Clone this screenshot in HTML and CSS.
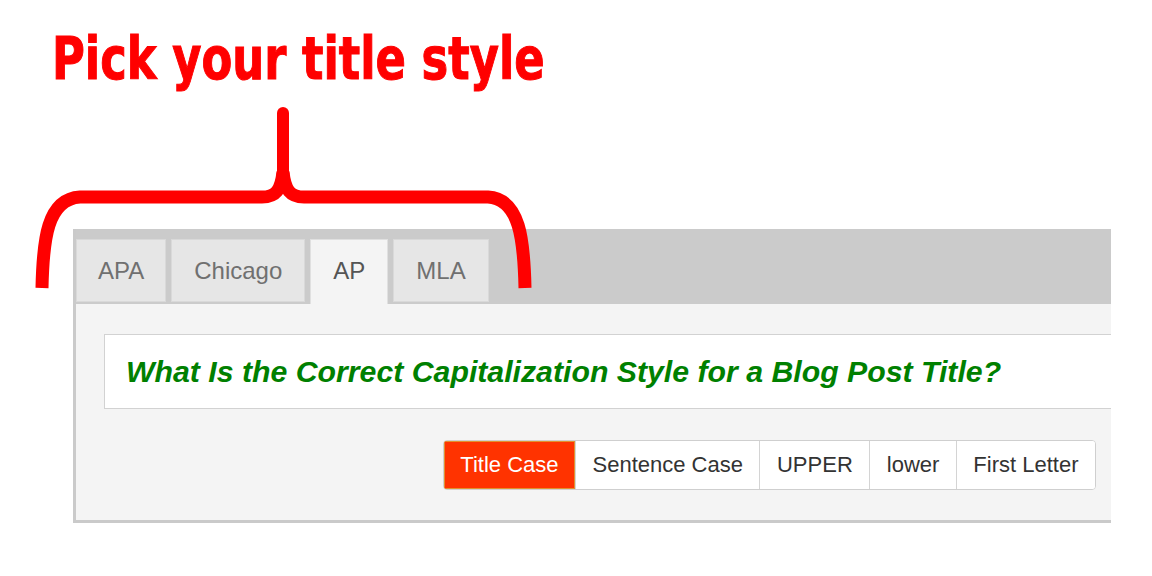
FILE: index.html
```html
<!DOCTYPE html>
<html lang="en">
<head>
    <meta charset="UTF-8">
    <title>Pick your title style</title>
    <link rel="stylesheet" href="styles.css">
</head>
<body>
    <div class="page">
        <div class="callout">
            <h1>Pick your title style</h1>
        </div>

        <!-- curly brace pointing at the style tabs -->
        <svg class="brace" width="560" height="300" viewBox="0 0 560 300">
            <path d="M42 288 C43 240 47 199 80 197 L262 197 C276 197 281 190 283 172" />
            <path d="M525 288 C524 240 520 199 488 197 L304 197 C290 197 285 190 283 172" />
            <path d="M283 172 L283 113" class="stem" />
        </svg>

        <div class="styler">
            <div class="tabs">
                <div class="tab">APA</div>
                <div class="tab">Chicago</div>
                <div class="tab active">AP</div>
                <div class="tab">MLA</div>
            </div>

            <div class="tab-body">
                <div class="result">What Is the Correct Capitalization Style for a Blog Post Title?</div>

                <div class="case-bar">
                    <div class="case-group">
                        <button class="case-btn active">Title Case</button>
                        <button class="case-btn">Sentence Case</button>
                        <button class="case-btn">UPPER</button>
                        <button class="case-btn">lower</button>
                        <button class="case-btn">First Letter</button>
                    </div>
                </div>
            </div>
        </div>
    </div>
</body>
</html>
```

FILE: styles.css
```css
body { margin: 0; background: #fff; font-family: "Liberation Sans", Arial, sans-serif; }
.page { position: relative; width: 1152px; height: 576px; overflow: hidden; }

.callout { height: 229px; padding-left: 52px; box-sizing: border-box; }
.callout h1 { margin: 0; padding-top: 29px; font-family: "DejaVu Sans Condensed", "DejaVu Sans", sans-serif; font-weight: bold; font-size: 59px; line-height: 59px; color: #ff0000; transform: scaleX(0.845); transform-origin: left top; white-space: nowrap; -webkit-text-stroke: 1px #ff0000; }

.brace { position: absolute; left: 0; top: 0; z-index: 5; }
.brace path { fill: none; stroke: #ff0000; stroke-width: 13; stroke-linejoin: round; }
.brace path.stem { stroke-width: 12; stroke-linecap: round; }

.styler { margin-left: 73px; width: 1035px; background: #f4f4f4; border-left: 3px solid #cacaca; border-bottom: 3px solid #cacaca; overflow: hidden; }
.tabs { display: flex; align-items: flex-start; gap: 5px; height: 65px; padding-top: 10px; background: #cbcbcb; }
.tab { box-sizing: border-box; height: 63px; line-height: 61px; padding: 0 22px; font-size: 24px; color: #707070; background: #e6e6e6; border: 1px solid #d9d9d9; }
.tab:first-child { padding: 0 21px; }
.tab.active { height: 65px; background: #f4f4f4; color: #555; border-color: #e0e0e0; border-bottom: none; }

.tab-body { padding: 30px 0 30px 28px; }
.result { box-sizing: border-box; height: 75px; margin-right: -4px; padding-left: 21px; line-height: 73px; background: #fff; border: 1px solid #d2d2d2; font-size: 30.25px; font-weight: bold; font-style: italic; color: #008000; white-space: nowrap; }

.case-bar { display: flex; justify-content: flex-end; margin-top: 31px; padding-right: 15px; }
.case-group { display: flex; border: 1px solid #cfcfcf; border-radius: 4px; background: #fff; overflow: hidden; }
.case-btn { height: 48px; padding: 0 16.5px; font-family: "Liberation Sans", Arial, sans-serif; font-size: 22px; color: #333; background: #fff; border: none; border-left: 1px solid #d4d4d4; cursor: pointer; }
.case-btn:first-child { border-left: none; }
.case-btn.active { background: #ff3300; color: #fff; box-shadow: inset 0 0 0 1px #e2902e; }
```
